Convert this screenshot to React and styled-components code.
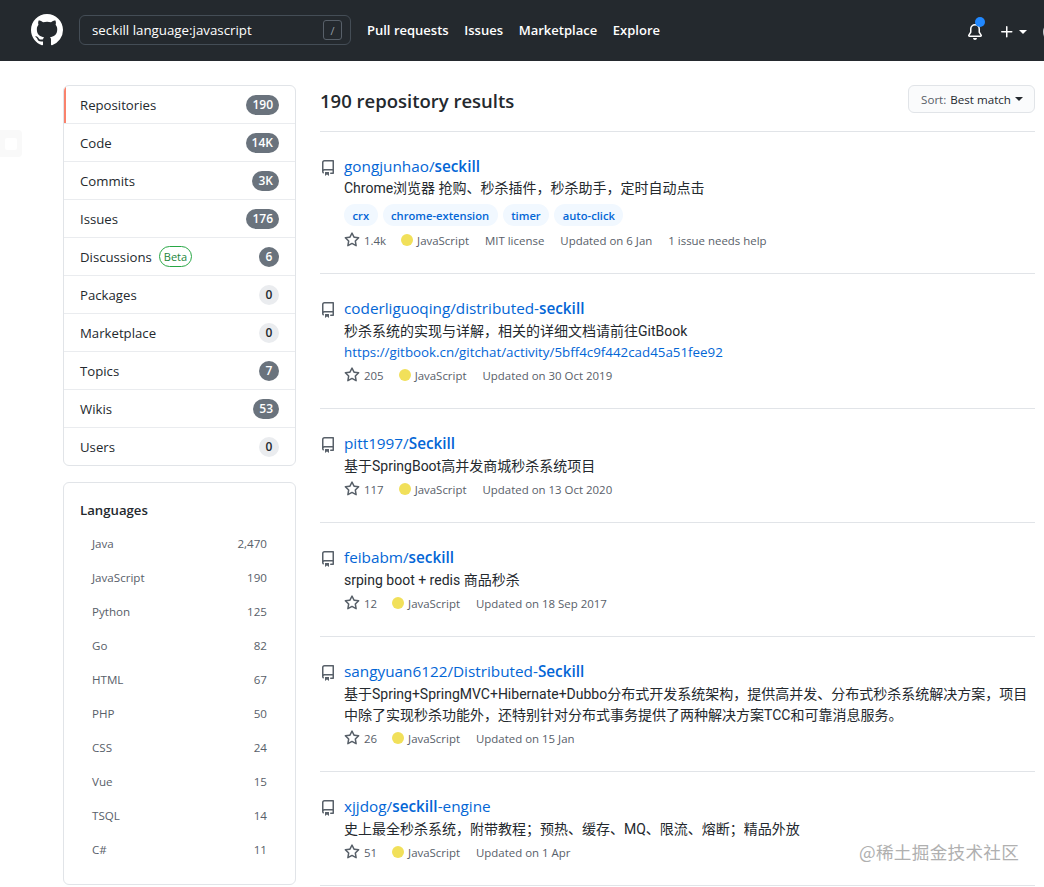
import React from "react";
import styled, { createGlobalStyle } from "styled-components";

const Global = createGlobalStyle`
  html, body { margin: 0; padding: 0; background: #fff; height: 887px; overflow: hidden; }
  body { font-family: "Open Sans", "Noto Sans CJK SC", sans-serif; color: #24292e; font-size: 14px; }
  * { box-sizing: border-box; }
`;

const Page = styled.div`position: relative; width: 1044px; height: 887px; overflow: hidden;`;
const Header = styled.header`
  height: 61px; background: #24292e; display: flex; align-items: center; padding: 0 0 1px 31px; color: #fff; position: relative;
`;
const Logo = styled.svg`width: 32px; height: 32px; fill: #fff; flex: none;`;
const Search = styled.div`
  margin-left: 16px; width: 272px; height: 30px; border: 1px solid #444d56; border-radius: 6px;
  display: flex; align-items: center; justify-content: space-between; padding: 0 8px 0 12px; font-size: 13.3px; color: #fff;
`;
const Slash = styled.span`
  width: 19px; height: 20px; border: 1px solid #586069; border-radius: 3px; display: flex; align-items: center; justify-content: center;
  font-size: 11px; color: #959da5;
`;
const Nav = styled.nav`display: flex; gap: 15.7px; margin-left: 16px; font-weight: 600; font-size: 13px;`;
const HeaderRight = styled.div`position: absolute; left: 967px; top: 24px; display: flex; align-items: center;`;
const Dot = styled.span`position: absolute; left: 8px; top: -7px; width: 10px; height: 10px; border-radius: 50%; background: #2188ff;`;
const Caret = styled.span`
  display: inline-block; border: 4px solid transparent; border-top-color: ${p => p.$c || "#fff"}; border-bottom: 0; margin-left: 4px;
`;
const Plus = styled.svg`width: 16px; height: 16px; fill: #fff; margin-left: 16px;`;
const Bell = styled.svg`width: 16px; height: 16px; fill: #fff;`;
const Avatar = styled.span`position: absolute; left: 76px; top: -2px; width: 20px; height: 20px; border-radius: 50%; background: #c8ccd0;`;

const Body = styled.div`display: flex; padding: 24px 0 0 63px; gap: 24px; align-items: flex-start;`;
const Side = styled.aside`width: 233px; flex: none; display: flex; flex-direction: column; gap: 16px;`;
const Card = styled.div`border: 1px solid #e1e4e8; border-radius: 6px; background: #fff; overflow: hidden;`;
const SideRow = styled.div`
  height: 38px; display: flex; align-items: center; justify-content: space-between; padding: 0 16px;
  font-size: 13.2px; color: #24292e;
  & + & { border-top: 1px solid #eaecef; }
  ${p => p.$active && `height: 37px; border-left: 2px solid #f9826c; padding-left: 14px;`}
`;
const Label = styled.span`display: flex; align-items: center; gap: 7px;`;
const Beta = styled.span`
  height: 21px; padding: 0 4px; border: 1px solid #28a745; border-radius: 11px; color: #22863a; font-size: 11px; display: flex; align-items: center;
`;
const Count = styled.span`
  min-width: 20px; height: 20px; padding: 0 6px; border-radius: 10px; display: flex; align-items: center; justify-content: center;
  font-size: 12px; font-weight: 600; background: ${p => p.$zero ? "#eaecef" : "#6a737d"}; color: ${p => p.$zero ? "#24292e" : "#fff"};
`;
const LangCard = styled(Card)`padding: 17px 16px; height: 403px;`;
const LangTitle = styled.h3`margin: 0 0 6px; font-size: 13.2px; font-weight: 600; line-height: 20px;`;
const LangRow = styled.div`
  height: 34px; display: flex; align-items: center; justify-content: space-between; padding: 0 12px; font-size: 11.6px; color: #586069;
`;

const Main = styled.main`width: 715px; flex: none;`;
const ResultsHead = styled.div`
  height: 47px; display: flex; justify-content: space-between; align-items: flex-start; border-bottom: 1px solid #e1e4e8;
`;
const H = styled.h3`margin: 0; font-size: 18.5px; font-weight: 600; line-height: 32px;`;
const Sort = styled.div`
  height: 28px; width: 127px; border: 1px solid #e1e4e8; border-radius: 6px; background: #fafbfc; display: flex; align-items: center;
  justify-content: center; font-size: 11.6px; color: #586069; font-weight: 500; padding-left: 1px;
`;
const SortVal = styled.span`color: #24292e; margin-left: 4px;`;
const Repo = styled.div`
  height: ${p => p.$h}px; border-bottom: 1px solid #e1e4e8; padding-top: ${p => p.$tagged ? 23 : 22}px; display: flex; gap: 8px;
`;
const RepoIcon = styled.svg`width: 16px; height: 16px; fill: #586069; margin-top: ${p => p.$tagged ? 5 : 6}px; flex: none;`;
const RepoBody = styled.div`flex: 1; min-width: 0;`;
const Title = styled.a`display: block; font-size: 15.3px; line-height: ${p => p.$tagged ? 22 : 24}px; color: #0366d6;`;
const Strong = styled.b`font-weight: 600;`;
const Desc = styled.p`margin: 1px 0 0; font-family: Roboto, "Noto Sans CJK SC", sans-serif; font-size: 14px; line-height: 21px; color: #24292e;`;
const UrlLine = styled.a`display: block; font-size: 13.35px; line-height: 21px; color: #0366d6;`;
const Tags = styled.div`display: flex; gap: 5px; margin: 5px 0 0;`;
const Tag = styled.span`
  height: 22px; padding: 0 8.5px; border-radius: 11px; background: #f1f8ff; color: #0366d6; font-size: 11.2px; font-weight: 600; display: flex; align-items: center;
`;
const Meta = styled.div`display: flex; align-items: center; margin-top: ${p => p.$tagged ? 4 : 2}px; height: 20px; font-size: 11.45px; color: #586069;`;
const Star = styled.svg`width: 16px; height: 16px; fill: #586069; margin-right: 4px;`;
const Lang = styled.span`display: flex; align-items: center; margin-left: 15px;`;
const LangDot = styled.span`width: 12px; height: 12px; border-radius: 50%; background: #f1e05a; margin-right: 4px;`;
const MetaItem = styled.span`margin-left: 16px;`;
const Watermark = styled.div`
  position: absolute; left: 859px; top: 839px; font-size: 17.6px; color: #b0b0b0; font-family: "Noto Sans CJK SC", sans-serif; letter-spacing: .3px;
`;
const Ghost = styled.div`
  position: absolute; left: 0; top: 130px; width: 22px; height: 27px; background: #f9f9f9; border-radius: 0 4px 4px 0;
  display: flex; align-items: center; justify-content: center;
`;
const GhostInner = styled.span`width: 12px; height: 12px; background: #fff; border-radius: 2px;`;

const repoPath = "M2 2.5A2.5 2.5 0 014.5 0h8.75a.75.75 0 01.75.75v12.5a.75.75 0 01-.75.75h-2.5a.75.75 0 110-1.5h1.75v-2h-8a1 1 0 00-.714 1.7.75.75 0 01-1.072 1.05A2.495 2.495 0 012 11.5v-9zm10.5-1V9h-8c-.356 0-.694.074-1 .208V2.5a1 1 0 011-1h8zM5 12.25v3.25a.25.25 0 00.4.2l1.45-1.087a.25.25 0 01.3 0L8.6 15.7a.25.25 0 00.4-.2v-3.25a.25.25 0 00-.25-.25h-3.5a.25.25 0 00-.25.25z";
const starPath = "M8 .25a.75.75 0 01.673.418l1.882 3.815 4.21.612a.75.75 0 01.416 1.279l-3.046 2.97.719 4.192a.75.75 0 01-1.088.791L8 12.347l-3.766 1.98a.75.75 0 01-1.088-.79l.72-4.194L.818 6.374a.75.75 0 01.416-1.28l4.21-.611L7.327.668A.75.75 0 018 .25zm0 2.445L6.615 5.5a.75.75 0 01-.564.41l-3.097.45 2.24 2.184a.75.75 0 01.216.664l-.528 3.084 2.769-1.456a.75.75 0 01.698 0l2.77 1.456-.53-3.084a.75.75 0 01.216-.664l2.24-2.183-3.096-.45a.75.75 0 01-.564-.41L8 2.694z";

const sideRows = [
  ["Repositories", "190"], ["Code", "14K"], ["Commits", "3K"], ["Issues", "176"], ["Discussions", "6", true],
  ["Packages", "0"], ["Marketplace", "0"], ["Topics", "7"], ["Wikis", "53"], ["Users", "0"],
];
const langs = [["Java", "2,470"], ["JavaScript", "190"], ["Python", "125"], ["Go", "82"], ["HTML", "67"], ["PHP", "50"], ["CSS", "24"], ["Vue", "15"], ["TSQL", "14"], ["C#", "11"]];
const repos = [
  { h: 142, o: "gongjunhao/", n: "seckill", d: "Chrome浏览器 抢购、秒杀插件，秒杀助手，定时自动点击", tags: ["crx", "chrome-extension", "timer", "auto-click"], star: "1.4k", meta: ["MIT license", "Updated on 6 Jan", "1 issue needs help"] },
  { h: 135, o: "coderliguoqing/distributed-", n: "seckill", d: "秒杀系统的实现与详解，相关的详细文档请前往GitBook", url: "https://gitbook.cn/gitchat/activity/5bff4c9f442cad45a51fee92", star: "205", meta: ["Updated on 30 Oct 2019"] },
  { h: 114, o: "pitt1997/", n: "Seckill", d: "基于SpringBoot高并发商城秒杀系统项目", star: "117", meta: ["Updated on 13 Oct 2020"] },
  { h: 114, o: "feibabm/", n: "seckill", d: "srping boot + redis 商品秒杀", star: "12", meta: ["Updated on 18 Sep 2017"] },
  { h: 135, o: "sangyuan6122/Distributed-", n: "Seckill", d: "基于Spring+SpringMVC+Hibernate+Dubbo分布式开发系统架构，提供高并发、分布式秒杀系统解决方案，项目中除了实现秒杀功能外，还特别针对分布式事务提供了两种解决方案TCC和可靠消息服务。", star: "26", meta: ["Updated on 15 Jan"] },
  { h: 114, o: "xjjdog/", n: "seckill", s: "-engine", d: "史上最全秒杀系统，附带教程；预热、缓存、MQ、限流、熔断；精品外放", star: "51", meta: ["Updated on 1 Apr"] },
];

export default function App() {
  return (
    <Page>
      <Global />
      <Header>
        <Logo viewBox="0 0 16 16"><path fillRule="evenodd" d="M8 0C3.58 0 0 3.58 0 8c0 3.54 2.29 6.53 5.47 7.59.4.07.55-.17.55-.38 0-.19-.01-.82-.01-1.49-2.01.37-2.53-.49-2.69-.94-.09-.23-.48-.94-.82-1.13-.28-.15-.68-.52-.01-.53.63-.01 1.08.58 1.23.82.72 1.21 1.87.87 2.33.66.07-.52.28-.87.51-1.07-1.78-.2-3.64-.89-3.64-3.95 0-.87.31-1.59.82-2.15-.08-.2-.36-1.02.08-2.12 0 0 .67-.21 2.2.82.64-.18 1.32-.27 2-.27.68 0 1.36.09 2 .27 1.53-1.04 2.2-.82 2.2-.82.44 1.1.16 1.92.08 2.12.51.56.82 1.27.82 2.15 0 3.07-1.87 3.75-3.65 3.95.29.25.54.73.54 1.48 0 1.07-.01 1.93-.01 2.2 0 .21.15.46.55.38A8.013 8.013 0 0016 8c0-4.42-3.58-8-8-8z" /></Logo>
        <Search>seckill language:javascript<Slash>/</Slash></Search>
        <Nav><span>Pull requests</span><span>Issues</span><span>Marketplace</span><span>Explore</span></Nav>
        <HeaderRight>
          <Bell viewBox="0 0 16 16"><path d="M8 16a2 2 0 001.985-1.75c.017-.137-.097-.25-.235-.25h-3.5c-.138 0-.252.113-.235.25A2 2 0 008 16zM3 5a5 5 0 0110 0v2.947c0 .05.015.098.042.139l1.703 2.555A1.518 1.518 0 0113.482 13H2.518a1.518 1.518 0 01-1.263-2.36l1.703-2.554A.25.25 0 003 7.947V5zm5-3.5A3.5 3.5 0 004.5 5v2.947c0 .346-.102.683-.294.97l-1.703 2.556a.018.018 0 00-.003.01.015.015 0 00.005.012.017.017 0 00.006.004l.007.001h10.964l.007-.001a.017.017 0 00.006-.004.015.015 0 00.005-.012.018.018 0 00-.003-.01l-1.703-2.554a1.75 1.75 0 01-.294-.97V5A3.5 3.5 0 008 1.5z" /></Bell>
          <Dot />
          <Plus viewBox="0 0 16 16"><path d="M7.75 2a.75.75 0 01.75.75V7h4.25a.75.75 0 010 1.5H8.5v4.25a.75.75 0 01-1.5 0V8.5H2.75a.75.75 0 010-1.5H7V2.75A.75.75 0 017.75 2z" /></Plus>
          <Caret />
          <Avatar />
        </HeaderRight>
      </Header>
      <Body>
        <Side>
          <Card>
            {sideRows.map(([l, c, beta], i) => (
              <SideRow key={l} $active={i === 0}>
                <Label>{l}{beta && <Beta>Beta</Beta>}</Label>
                <Count $zero={c === "0"}>{c}</Count>
              </SideRow>
            ))}
          </Card>
          <LangCard>
            <LangTitle>Languages</LangTitle>
            {langs.map(([l, c]) => <LangRow key={l}><span>{l}</span><span>{c}</span></LangRow>)}
          </LangCard>
        </Side>
        <Main>
          <ResultsHead>
            <H>190 repository results</H>
            <Sort>Sort:<SortVal>Best match</SortVal><Caret $c="#24292e" /></Sort>
          </ResultsHead>
          {repos.map(r => {
            const tagged = !!r.tags;
            return (
              <Repo key={r.o} $h={r.h} $tagged={tagged}>
                <RepoIcon viewBox="0 0 16 16" $tagged={tagged}><path fillRule="evenodd" d={repoPath} /></RepoIcon>
                <RepoBody>
                  <Title $tagged={tagged}>{r.o}<Strong>{r.n}</Strong>{r.s}</Title>
                  <Desc>{r.d}</Desc>
                  {r.url && <UrlLine>{r.url}</UrlLine>}
                  {r.tags && <Tags>{r.tags.map(t => <Tag key={t}>{t}</Tag>)}</Tags>}
                  <Meta $tagged={tagged}>
                    <Star viewBox="0 0 16 16"><path fillRule="evenodd" d={starPath} /></Star>
                    {r.star}
                    <Lang><LangDot />JavaScript</Lang>
                    {r.meta.map(m => <MetaItem key={m}>{m}</MetaItem>)}
                  </Meta>
                </RepoBody>
              </Repo>
            );
          })}
        </Main>
      </Body>
      <Ghost><GhostInner /></Ghost>
      <Watermark>@稀土掘金技术社区</Watermark>
    </Page>
  );
}
